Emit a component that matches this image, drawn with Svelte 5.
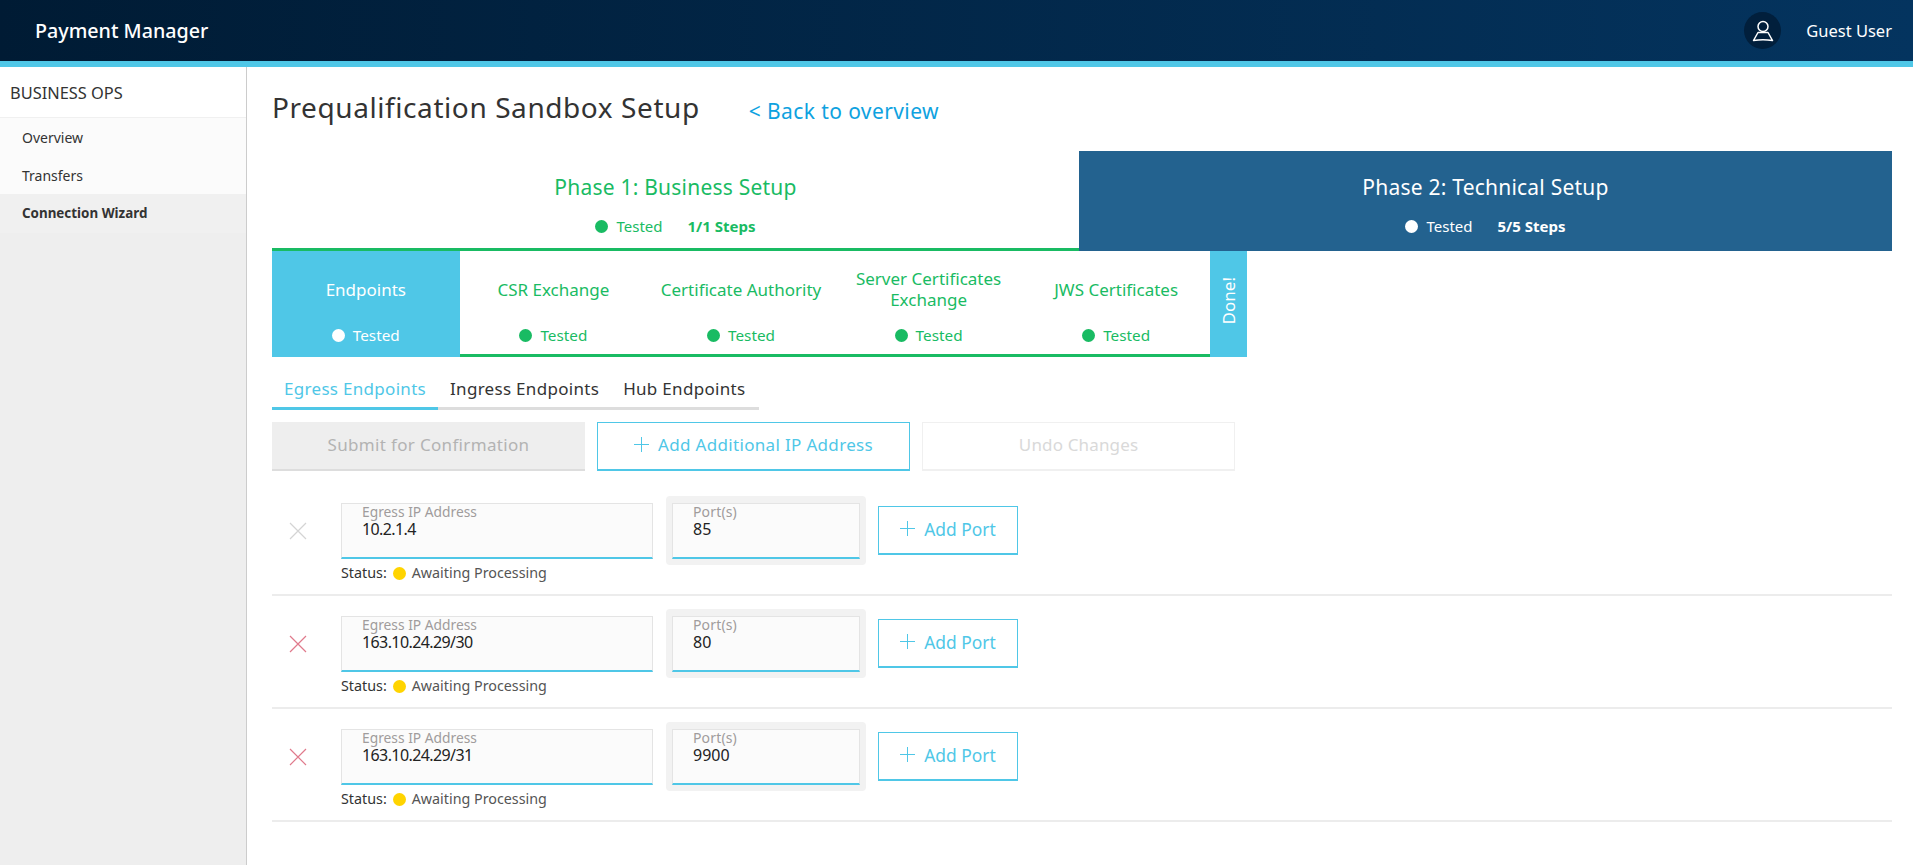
<script>
  const steps = [
    { name: ['Endpoints'], active: true },
    { name: ['CSR Exchange'] },
    { name: ['Certificate Authority'] },
    { name: ['Server Certificates', 'Exchange'] },
    { name: ['JWS Certificates'] }
  ];
  const rows = [
    { ip: '10.2.1.4', port: '85', removable: false },
    { ip: '163.10.24.29/30', port: '80', removable: true },
    { ip: '163.10.24.29/31', port: '9900', removable: true }
  ];
</script>

<div class="app">
  <header class="top">
    <div class="brand">Payment Manager</div>
    <div class="user">
      <span class="avatar">
        <svg width="22" height="22" viewBox="0 0 22 22" fill="none" stroke="#fff" stroke-width="1.5">
          <circle cx="11" cy="6.5" r="5" />
          <path d="M6 12.5 H16 L20.5 20.5 Q11 19 1.5 20.5 Z" stroke-linejoin="round" />
        </svg>
      </span>
      <span class="username">Guest User</span>
    </div>
  </header>

  <div class="body">
    <aside class="side">
      <div class="side-title">BUSINESS OPS</div>
      <nav class="side-list">
        <div class="side-item">Overview</div>
        <div class="side-item">Transfers</div>
        <div class="side-item current">Connection Wizard</div>
      </nav>
    </aside>

    <main class="main">
      <div class="heading">
        <h1>Prequalification Sandbox Setup</h1>
        <span class="back">&lt; Back to overview</span>
      </div>

      <div class="phases">
        <div class="phase done">
          <div class="phase-name">Phase 1: Business Setup</div>
          <div class="phase-meta"><i class="dot"></i><span>Tested</span><b>1/1 Steps</b></div>
        </div>
        <div class="phase open">
          <div class="phase-name">Phase 2: Technical Setup</div>
          <div class="phase-meta"><i class="dot"></i><span>Tested</span><b>5/5 Steps</b></div>
        </div>
      </div>

      <div class="steps">
        {#each steps as s}
          <div class="step" class:active={s.active}>
            <div class="step-name">{#each s.name as l}<div>{l}</div>{/each}</div>
            <div class="step-state"><i class="dot"></i><span>Tested</span></div>
          </div>
        {/each}
        <div class="done-tab"><span>Done!</span></div>
      </div>

      <div class="tabs">
        <div class="tab sel">Egress Endpoints</div>
        <div class="tab">Ingress Endpoints</div>
        <div class="tab">Hub Endpoints</div>
      </div>

      <div class="actions">
        <button class="btn submit">Submit for Confirmation</button>
        <button class="btn add"><span class="plus"></span>Add Additional IP Address</button>
        <button class="btn undo">Undo Changes</button>
      </div>

      {#each rows as r}
        <section class="row">
          <div class="line">
            <span class="remove" class:on={r.removable}>
              <svg width="18" height="18" viewBox="0 0 18 18" stroke="currentColor" stroke-width="1.2"><path d="M1 1 L17 17 M17 1 L1 17" /></svg>
            </span>
            <div class="field ip">
              <label>Egress IP Address</label>
              <div class="val">{r.ip}</div>
            </div>
            <div class="port-wrap">
              <div class="field port">
                <label>Port(s)</label>
                <div class="val">{r.port}</div>
              </div>
            </div>
            <button class="btn add small"><span class="plus"></span>Add Port</button>
          </div>
          <div class="status">Status: <i class="dot yellow"></i><span>Awaiting Processing</span></div>
        </section>
      {/each}
    </main>
  </div>
</div>

<style>
  :global(body) {
    margin: 0;
    background: #fff;
    font-family: "Noto Sans", "Open Sans", sans-serif;
    color: #333;
  }
  .app { width: 1913px; height: 865px; overflow: hidden; display: flex; flex-direction: column; }
  .top {
    height: 61px;
    flex: none;
    border-bottom: 6px solid #4fc7e7;
    background: linear-gradient(90deg, #001b34 0%, #04345f 100%);
    display: flex;
    align-items: center;
    justify-content: space-between;
    color: #fff;
    padding: 0 21px 0 35px;
  }
  .brand { font-size: 19.7px; font-weight: 500; }
  .user { display: flex; align-items: center; gap: 25px; }
  .avatar {
    width: 37px; height: 37px; border-radius: 50%;
    background: #011f3c;
    display: flex; align-items: center; justify-content: center;
  }
  .username { font-size: 16.5px; }
  .body { flex: 1; display: flex; min-height: 0; }
  .side {
    width: 246px; flex: none;
    border-right: 1px solid #ccc;
    background: #eee;
    display: flex; flex-direction: column;
  }
  .side-title {
    height: 50px; background: #fff;
    border-bottom: 1px solid #f0f0f0;
    display: flex; align-items: center;
    padding-left: 10px;
    font-size: 16.4px;
  }
  .side-list { background: #fbfbfb; }
  .side-item {
    height: 38px; display: flex; align-items: center;
    padding-left: 22px; font-size: 14px;
  }
  .side-item.current { background: #f0f0f0; font-weight: 700; height: 39px; font-size: 13.4px; padding-bottom: 2px; box-sizing: border-box; }
  .main { flex: 1; min-width: 0; padding: 0 21px 0 25px; }
  .heading { height: 84px; display: flex; align-items: center; gap: 49px; padding-bottom: 4px; box-sizing: border-box; }
  h1 { margin: 0; font-size: 28px; font-weight: 400; letter-spacing: 0.58px; }
  .back { color: #0ea2e0; font-size: 21px; letter-spacing: 0.4px; margin-top: 8px; }
  .phases { display: flex; height: 100px; }
  .phase {
    box-sizing: border-box;
    display: flex; flex-direction: column; align-items: center;
    padding-top: 22px;
  }
  .phase.done { width: 807px; color: #19bb63; border-bottom: 3px solid #19bb63; }
  .phase.open { flex: 1; background: #23628f; color: #fff; }
  .phase-name { font-size: 21px; line-height: 28px; letter-spacing: 0.22px; }
  .phase-meta { display: flex; align-items: center; margin-top: 15px; font-size: 15px; line-height: 20px; }
  .phase-meta b { margin-left: 25px; font-size: 15px; }
  .dot { width: 13px; height: 13px; border-radius: 50%; background: currentColor; margin-right: 8px; display: inline-block; flex: none; }
  .steps { width: 975px; height: 106px; display: flex; }
  .step {
    width: 187.6px; flex: none; box-sizing: border-box;
    border-bottom: 3px solid #19bb63;
    color: #19bb63;
    display: flex; flex-direction: column; align-items: center;
    text-align: center;
    font-size: 17px;
  }
  .step.active { background: #4fc7e7; color: #fff; border-bottom-color: #4fc7e7; }
  .step-name { height: 71px; display: flex; flex-direction: column; justify-content: center; line-height: 21px; padding-top: 5px; box-sizing: border-box; }
  .step-state { display: flex; align-items: center; line-height: 20px; font-size: 15.3px; margin-top: 3px; }
  .done-tab {
    flex: 1; background: #4fc7e7; color: #fff;
    display: flex; align-items: center; justify-content: center;
    font-size: 17px;
    padding-bottom: 6px;
    box-sizing: border-box;
  }
  .done-tab span { writing-mode: vertical-rl; transform: rotate(180deg); }
  .tabs { display: flex; width: 487px; margin-top: 18px; height: 32px; border-bottom: 3px solid #ddd; position: relative; }
  .tab { padding: 0 12px; font-size: 17px; letter-spacing: 0.3px; line-height: 27px; height: 32px; box-sizing: border-box; }
  .tab.sel { color: #4fc7e7; border-bottom: 3px solid #4fc7e7; height: 35px; }
  .actions { display: flex; gap: 12px; margin-top: 12px; width: 963px; }
  .btn {
    font: inherit; background: #fff; box-sizing: border-box;
    display: inline-flex; align-items: center; justify-content: center;
    font-size: 17.4px; padding: 0 0 3px; cursor: pointer;
  }
  .actions .btn { width: 313px; height: 49px; font-size: 17px; letter-spacing: 0.33px; }
  .actions .undo { letter-spacing: 0.15px; }
  .submit { background: #eee; color: #b3b3b3; border: 0; border-bottom: 2px solid #ddd; }
  .add { border: 1px solid #4fc7e7; border-bottom-width: 2px; color: #4fc7e7; }
  .undo { border: 1px solid #f0f0f0; border-bottom-width: 2px; color: #d9d9d9; }
  .plus { position: relative; width: 15px; height: 15px; margin-right: 9px; display: inline-block; }
  .plus::before, .plus::after { content: ""; position: absolute; background: #4fc7e7; }
  .plus::before { left: 7px; top: 0; width: 1px; height: 15px; }
  .plus::after { top: 7px; left: 0; width: 15px; height: 1px; }
  .row { height: 113px; box-sizing: border-box; border-bottom: 2px solid #ececec; padding-top: 13px; }
  .row:first-of-type { margin-top: 12px; }
  .line { display: flex; align-items: center; height: 69px; }
  .remove { width: 69px; color: #d4d4d4; display: flex; padding-left: 17px; box-sizing: border-box; }
  .remove.on { color: #e07a8c; }
  .field {
    box-sizing: border-box; height: 56px; background: #fbfbfb;
    border: 1px solid #e4e4e4; border-bottom: 2px solid #4fc7e7;
    padding: 0 20px;
  }
  .ip { width: 312px; }
  .port { width: 188px; }
  .port-wrap { width: 200px; height: 69px; margin-left: 13px; box-sizing: border-box; background: #f2f2f2; border-radius: 4px; display: flex; align-items: center; justify-content: center; }
  label { display: block; font-size: 13.8px; line-height: 16px; color: #a09c9c; }
  .port label { font-size: 14px; letter-spacing: 0.15px; }
  .val { font-size: 16px; line-height: 18px; color: #222; }
  .ip .val { letter-spacing: -0.6px; }
  .btn.small { width: 140px; height: 49px; margin-left: 12px; }
  .status { display: flex; align-items: center; font-size: 14.3px; line-height: 16px; padding-left: 69px; }
  .dot.yellow { color: #ffd400; margin: 0 6px; }
  .status span { color: #555; }
</style>
